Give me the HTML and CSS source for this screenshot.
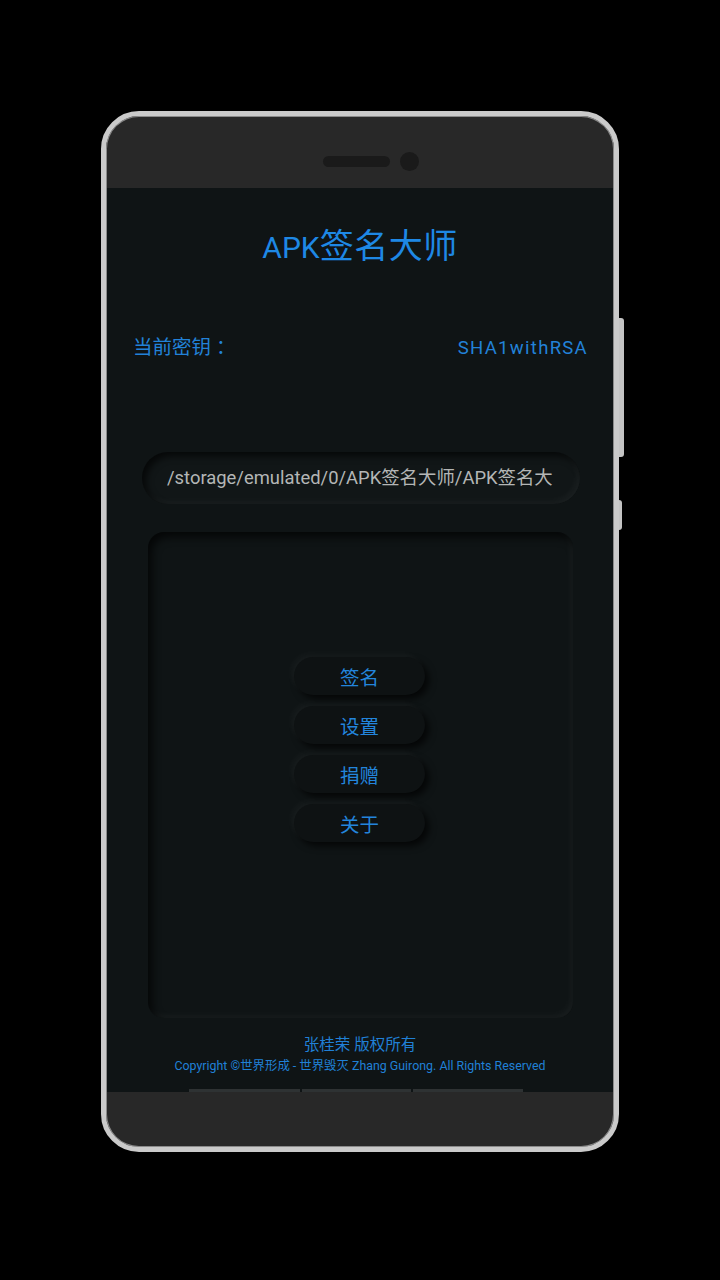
FILE: index.html
```html
<!DOCTYPE html>
<html lang="zh">
<head>
<meta charset="utf-8">
<link rel="stylesheet" href="styles.css">
</head>
<body>
<div class="phone">
  <div class="side-btn side-btn-long"></div>
  <div class="side-btn side-btn-short"></div>
  <div class="bezel-top">
    <div class="speaker"></div>
    <div class="camera"></div>
  </div>
  <div class="screen">
    <h1 class="title"><span class="lat">APK</span>签名大师</h1>
    <div class="key-row">
      <span>当前密钥<span class="colon">：</span></span>
      <span class="key-name">SHA1withRSA</span>
    </div>
    <div class="path-field"><span class="path-text">/storage/emulated/0/APK签名大师/APK签名大</span></div>
    <div class="card">
      <div class="btn">签名</div>
      <div class="btn">设置</div>
      <div class="btn">捐赠</div>
      <div class="btn">关于</div>
    </div>
    <div class="footer">
      <div class="owner">张桂荣 版权所有</div>
      <div class="copyright">Copyright ©世界形成 - 世界毁灭 Zhang Guirong. All Rights Reserved</div>
    </div>
    <div class="navbar">
      <div class="seg seg-a"></div>
      <div class="seg seg-b"></div>
      <div class="seg seg-c"></div>
    </div>
  </div>
</div>
</body>
</html>
```
FILE: styles.css
```css
html, body {
  margin: 0;
  padding: 0;
  background: #000;
}
body {
  width: 720px;
  height: 1280px;
  padding-top: 111px;
  box-sizing: border-box;
  font-family: "Roboto", "Noto Sans CJK SC", sans-serif;
}
.phone {
  position: relative;
  width: 518px;
  height: 1041px;
  margin: 0 0 0 101px;
  box-sizing: border-box;
  border: 5px solid #cacaca;
  border-radius: 38px;
  background: #282828;
  box-shadow: inset 0 0 0 1px #8a8a8a;
}
.side-btn {
  position: absolute;
  right: -10px;
  width: 5px;
  background: #c4c4c4;
  border-radius: 0 3px 3px 0;
}
.side-btn-long {
  top: 202px;
  height: 139px;
}
.side-btn-short {
  top: 384px;
  height: 30px;
  right: -8px;
  width: 3px;
}
.bezel-top {
  height: 72px;
  box-sizing: border-box;
  padding: 36px 0 0 22px;
  display: flex;
  justify-content: center;
  align-items: flex-start;
  gap: 10px;
}
.speaker {
  width: 67px;
  height: 11px;
  margin-top: 4px;
  border-radius: 6px;
  background: #1a1a1a;
}
.camera {
  width: 19px;
  height: 19px;
  border-radius: 50%;
  background: #1a1a1a;
}
.screen {
  margin: 0 1px;
  height: 904px;
  background: #0f1415;
  display: flex;
  flex-direction: column;
  align-items: center;
  box-sizing: border-box;
  padding-top: 40px;
}
.title {
  margin: 0;
  height: 36px;
  font-weight: normal;
  font-size: 34px;
  line-height: 36px;
  color: #1e88e5;
  letter-spacing: 0.5px;
}
.title .lat {
  font-size: 30px;
  letter-spacing: 0;
}
.key-row {
  align-self: stretch;
  height: 24px;
  margin-top: 72px;
  padding: 0 26px;
  display: flex;
  justify-content: space-between;
  align-items: center;
  font-size: 19.5px;
  line-height: 24px;
  color: #2282d8;
}
.colon {
  margin-left: 5px;
}
.key-name {
  font-size: 18.5px;
  letter-spacing: 1.3px;
  margin-right: -1px;
}
.path-field {
  margin-top: 92px;
  width: 438px;
  height: 52px;
  margin-left: 2px;
  box-sizing: border-box;
  border-radius: 26px;
  background: #111617;
  box-shadow: inset 4px 4px 7px rgba(0,0,0,0.65), inset -3px -3px 6px rgba(255,255,255,0.045);
  padding: 0 20px 5px 25px;
  display: flex;
  align-items: center;
}
.path-text {
  white-space: nowrap;
  font-size: 18.4px;
  color: #b4b6b6;
}
.card {
  margin-top: 28px;
  width: 425px;
  height: 486px;
  box-sizing: border-box;
  border-radius: 16px;
  background: #0f1415;
  box-shadow: inset 4px 5px 8px rgba(0,0,0,0.7), inset -3px -3px 6px rgba(255,255,255,0.045);
  padding-top: 125px;
  display: flex;
  flex-direction: column;
  align-items: center;
  gap: 11px;
}
.btn {
  width: 131px;
  height: 38px;
  margin-left: -1px;
  border-radius: 19px;
  background: #0e1213;
  box-shadow: -3px -3px 6px rgba(255,255,255,0.04), 4px 4px 7px rgba(0,0,0,0.7);
  display: flex;
  align-items: center;
  justify-content: center;
  font-size: 19.5px;
  color: #2385dc;
}
.footer {
  margin-top: 17px;
  display: flex;
  flex-direction: column;
  align-items: center;
  color: #2080d6;
}
.owner {
  font-size: 15.5px;
  line-height: 20px;
}
.copyright {
  margin-top: 3px;
  font-size: 12.4px;
  line-height: 15px;
}
.navbar {
  margin-top: auto;
  align-self: flex-start;
  margin-left: 82px;
  display: flex;
  gap: 2px;
}
.seg {
  height: 3px;
  background: #2e3233;
}
.seg-a { width: 111px; }
.seg-b { width: 109px; }
.seg-c { width: 110px; }
```
